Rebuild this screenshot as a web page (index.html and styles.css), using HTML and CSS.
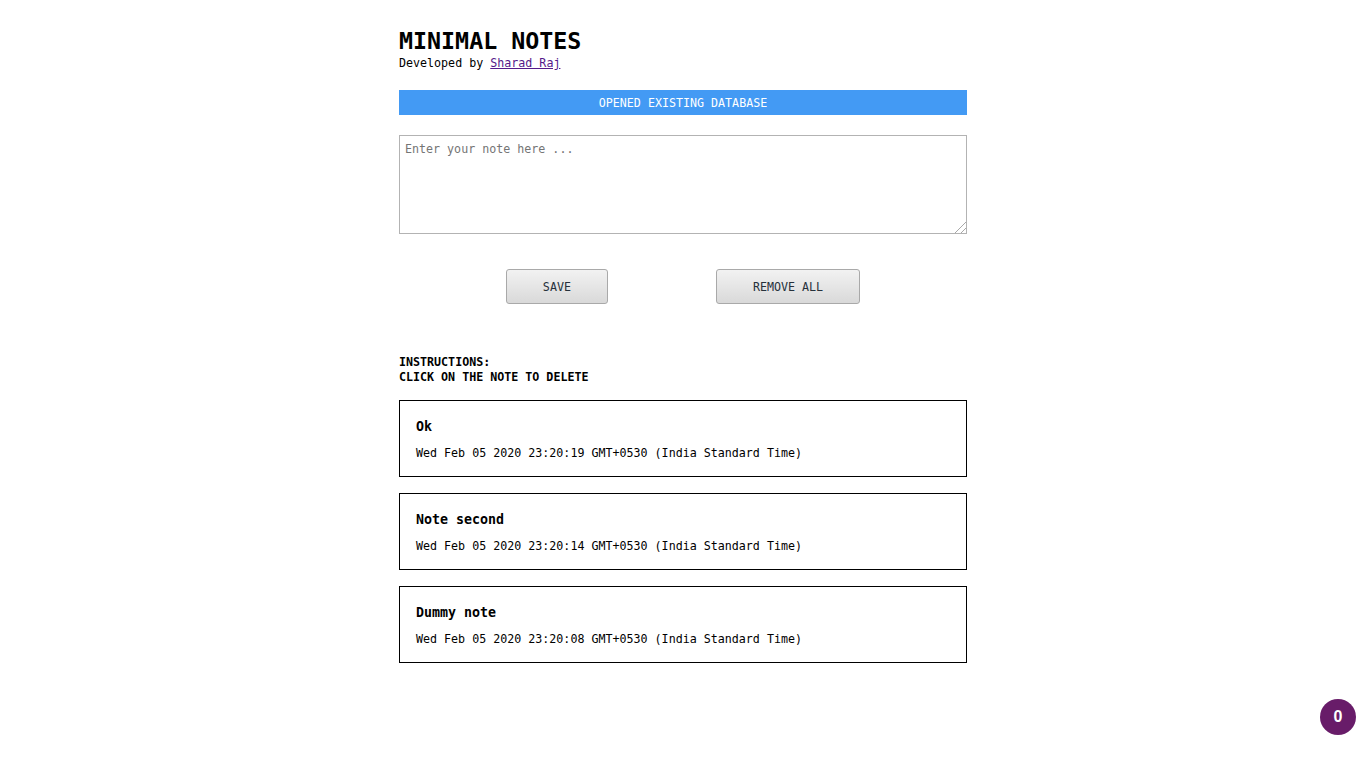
FILE: index.html
```html
<!DOCTYPE html>
<html lang="en">
<head>
<meta charset="utf-8">
<title>Minimal Notes</title>
<link rel="stylesheet" href="styles.css">
</head>
<body>
<main class="app">
  <header class="head">
    <h1 class="title">MINIMAL NOTES</h1>
    <p class="byline">Developed by <a class="author" href="#">Sharad Raj</a></p>
  </header>
  <div class="status">OPENED EXISTING DATABASE</div>
  <textarea class="note-input" placeholder="Enter your note here ..."></textarea>
  <div class="actions">
    <button class="btn btn-save">SAVE</button>
    <button class="btn btn-remove">REMOVE ALL</button>
  </div>
  <p class="instructions">INSTRUCTIONS:<br>CLICK ON THE NOTE TO DELETE</p>
  <ul class="notes">
    <li class="note">
      <div class="note-title">Ok</div>
      <div class="note-date">Wed Feb 05 2020 23:20:19 GMT+0530 (India Standard Time)</div>
    </li>
    <li class="note">
      <div class="note-title">Note second</div>
      <div class="note-date">Wed Feb 05 2020 23:20:14 GMT+0530 (India Standard Time)</div>
    </li>
    <li class="note">
      <div class="note-title">Dummy note</div>
      <div class="note-date">Wed Feb 05 2020 23:20:08 GMT+0530 (India Standard Time)</div>
    </li>
  </ul>
</main>
<div class="badge">0</div>
</body>
</html>
```
FILE: styles.css
```css
html, body {
  margin: 0;
  padding: 0;
  background: #fff;
}
body {
  font-family: "DejaVu Sans Mono", monospace;
  font-size: 11.66px;
  color: #000;
}
.app {
  width: 568px;
  margin: 0 auto;
  padding-top: 27px;
}
.title {
  margin: 0;
  font-size: 23.3px;
  line-height: 28px;
  font-weight: bold;
}
.byline {
  margin: 0;
  padding-top: 1px;
  line-height: 14px;
}
.author {
  color: #551a8b;
}
.status {
  box-sizing: border-box;
  margin-top: 20px;
  height: 25px;
  padding-top: 2px;
  line-height: 23px;
  background: #439af4;
  color: #fff;
  text-align: center;
}
.note-input {
  display: block;
  box-sizing: border-box;
  width: 568px;
  height: 99px;
  margin: 20px 0 0;
  padding: 6px 5px;
  border: 1px solid #b3b3b3;
  font-family: "DejaVu Sans Mono", monospace;
  font-size: 11.66px;
  color: #000;
  resize: none;
  outline: none;
  background-color: #fff;
  background-image:
    linear-gradient(135deg, #fff 50%, transparent 50%),
    repeating-linear-gradient(135deg, transparent 0 1.7px, #a8a8a8 1.7px 2.9px, transparent 2.9px 4.2px);
  background-size: 13px 13px, 13px 13px;
  background-position: right 0 bottom 0, right 0 bottom 0;
  background-repeat: no-repeat;
}
.note-input::placeholder {
  color: #757575;
}
.actions {
  display: flex;
  justify-content: center;
  gap: 108px;
  margin-top: 35px;
}
.btn {
  height: 35px;
  padding: 0 36px;
  border: 1px solid #a9a9a9;
  border-radius: 3px;
  background: linear-gradient(#f2f2f2, #d9d9d9);
  font-family: "DejaVu Sans Mono", monospace;
  font-size: 11.66px;
  color: #26313b;
  cursor: pointer;
}
.instructions {
  margin: 51px 0 0;
  font-weight: bold;
  line-height: 14.5px;
}
.notes {
  list-style: none;
  margin: 16px 0 0;
  padding: 0;
  display: flex;
  flex-direction: column;
  gap: 16px;
}
.note {
  box-sizing: border-box;
  height: 77px;
  border: 1px solid #000;
  padding: 18px 16px 0;
}
.note-title {
  font-size: 13.3px;
  font-weight: bold;
  line-height: 16px;
}
.note-date {
  margin-top: 11px;
  line-height: 14px;
}
.badge {
  position: fixed;
  right: 10px;
  bottom: 32px;
  width: 36px;
  height: 36px;
  border-radius: 50%;
  background: #681c69;
  color: #fff;
  font-family: "Liberation Sans", Arial, sans-serif;
  font-size: 16px;
  font-weight: bold;
  display: flex;
  align-items: center;
  justify-content: center;
}
```
